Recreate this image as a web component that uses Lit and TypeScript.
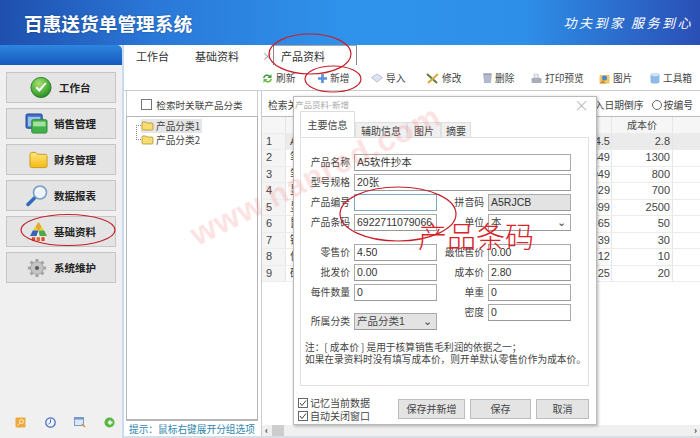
import { LitElement, html, css, svg } from "lit";
import { customElement } from "lit/decorators.js";

const icons: Record<string, unknown> = {
  check: svg`<svg width="22" height="23" viewBox="0 0 24 24"><defs><radialGradient id="g1" cx=".4" cy=".3" r=".8"><stop offset="0" stop-color="#a8e070"/><stop offset=".6" stop-color="#4cae3a"/><stop offset="1" stop-color="#1d7a22"/></radialGradient></defs><circle cx="12" cy="12" r="11" fill="url(#g1)" stroke="#2c7d2c"/><path d="M6 12.500l4.200 4.500L18 7.500l-1.500-1-6.300 6.800-2.600-2.400z" fill="#fff"/></svg>`,
  sales: svg`<svg width="23" height="21" viewBox="0 0 24 22"><rect x="1" y="1" width="17" height="15" rx="1.500" fill="#3f6fc8" stroke="#27468f"/><rect x="3" y="4" width="13" height="10" fill="#9cc0ee"/><rect x="7" y="7" width="16" height="14" rx="1.500" fill="#44b04a" stroke="#2e8a38"/><rect x="8.500" y="9" width="13" height="5" fill="#a6e0a0"/></svg>`,
  folder: svg`<svg width="19" height="18" viewBox="0 0 20 18"><defs><linearGradient id="g2" x1="0" y1="0" x2="0" y2="1"><stop offset="0" stop-color="#ffe680"/><stop offset="1" stop-color="#f4bb10"/></linearGradient></defs><path d="M1 3.500Q1 1 3 1h4l2 2h8q2 0 2 2v10q0 2-2 2H3q-2 0-2-2z" fill="url(#g2)" stroke="#c99a20"/></svg>`,
  search: svg`<svg width="22" height="23" viewBox="0 0 22 22"><path d="M9 13L2 20" stroke="#2c6cc0" stroke-width="3.500" stroke-linecap="round"/><circle cx="14" cy="8" r="6.500" fill="#eef4fb" stroke="#7d9cc4" stroke-width="1.600"/><path d="M10.500 6.500a4 4 0 0 1 4-2.500" stroke="#fff" stroke-width="1.500" fill="none"/></svg>`,
  base: svg`<svg width="19" height="23" viewBox="0 0 20 22"><path d="M10 1L4 10h12z" fill="#ecd11f"/><path d="M4 10L1 16h7l2-6z" fill="#3a62b8"/><path d="M10 10l1 6h8l-3-6z" fill="#4ea84e"/><path d="M7 6l3 4 3-4-3-5z" fill="#e7a43a"/><path d="M8 16h3l-1-6z" fill="#eee"/><rect x="1" y="16" width="18" height="5" fill="#f0efe8"/><rect x="3" y="17" width="3.500" height="4" fill="#d8492e"/><rect x="8" y="17" width="3.500" height="4" fill="#e26a30"/><rect x="13" y="17" width="3.500" height="4" fill="#d8492e"/></svg>`,
  gear: svg`<svg width="22" height="20" viewBox="0 0 22 22"><circle cx="11" cy="11" r="7.500" fill="#a8a8a8"/><g stroke="#a4a4a4" stroke-width="3.400"><path d="M11 1v20M1 11h20M4 4l14 14M18 4L4 18"/></g><circle cx="11" cy="11" r="6.500" fill="#c4c4c4"/><circle cx="11" cy="11" r="2.200" fill="#555"/></svg>`,
  refresh: svg`<svg width="11" height="11" viewBox="0 0 11 11"><path d="M1 5a4 4 0 0 1 7-2.200L9.500 1v4H5.500l1.300-1.200A2.400 2.400 0 0 0 2.600 5z" fill="#3d9b3d"/><path d="M10 6a4 4 0 0 1-7 2.200L1.500 10V6h4L4.200 7.200A2.400 2.400 0 0 0 8.400 6z" fill="#62b83c"/></svg>`,
  plus: svg`<svg width="9" height="9" viewBox="0 0 10 10"><path d="M3.500 0h3v3.500H10v3H6.500V10h-3V6.500H0v-3h3.500z" fill="#5a92dc"/></svg>`,
  imp: svg`<svg width="12" height="10" viewBox="0 0 12 10"><path d="M6 1l5.500 3.500L6 9 .5 4.500z" fill="#dfe3f4" stroke="#a9b0cf" stroke-width=".8"/></svg>`,
  edit: svg`<svg width="13" height="11" viewBox="0 0 13 11"><path d="M1 1l10 9" stroke="#6b7a35" stroke-width="2"/><path d="M12 1L2 10" stroke="#d9a83a" stroke-width="2"/></svg>`,
  del: svg`<svg width="9" height="10" viewBox="0 0 9 10"><path d="M.5 1h8L7.500 10h-6z" fill="#b5b9cd" stroke="#9a9eb5" stroke-width=".5"/><path d="M.5 1h8" stroke="#8a8fa8"/></svg>`,
  print: svg`<svg width="11" height="11" viewBox="0 0 11 11"><path d="M3 1h4l1 4H3z" fill="#e8eaf0" stroke="#aaa" stroke-width=".5"/><rect x=".5" y="5" width="10" height="5" rx="1" fill="#a9adb8"/></svg>`,
  pic: svg`<svg width="11" height="11" viewBox="0 0 11 11"><rect x=".5" y="2" width="10" height="8.500" rx="1" fill="#f0c860"/><circle cx="5.500" cy="5" r="2.500" fill="#4d84d4"/><path d="M.5 10.500L4 7l3 3.500z" fill="#d08a3a"/></svg>`,
  tool: svg`<svg width="10" height="12" viewBox="0 0 10 12"><rect x=".5" y="1" width="9" height="10.500" rx="2.500" fill="#8fb9e6"/><ellipse cx="5" cy="2.500" rx="4" ry="1.800" fill="#cfe2f6"/></svg>`,
  tree: svg`<svg width="13" height="10" viewBox="0 0 13 10"><path d="M1 2q0-1 1-1h3l1 1h5q1 0 1 1v5q0 1-1 1H2q-1 0-1-1z" fill="#f7dc70" stroke="#b09030" stroke-width=".8"/></svg>`,
  f1: svg`<svg width="11" height="11" viewBox="0 0 11 11"><rect x=".5" y=".5" width="10" height="10" rx="1" fill="#eda940"/><circle cx="6.500" cy="4.500" r="2" fill="none" stroke="#fff1c6"/><path d="M5 6L2.500 8.500" stroke="#fff1c6"/></svg>`,
  f2: svg`<svg width="11" height="11" viewBox="0 0 11 11"><circle cx="5.500" cy="5.500" r="4.700" fill="#eef2fb" stroke="#3f68bd" stroke-width="1.200"/><path d="M5.500 2.500v3L3.500 7" stroke="#3f68bd" fill="none"/></svg>`,
  f3: svg`<svg width="12" height="11" viewBox="0 0 12 11"><rect x=".5" y=".5" width="9" height="8" fill="#dbe8f7" stroke="#7f9cc4"/><rect x=".5" y=".5" width="9" height="2" fill="#6f95cc"/><path d="M8 7l3 3" stroke="#d49a3c" stroke-width="1.600"/></svg>`,
  f4: svg`<svg width="11" height="11" viewBox="0 0 11 11"><circle cx="5.500" cy="5.500" r="5" fill="#58b83e"/><path d="M6.500 2.500L3.500 5.500l3 3v-2h2v-2h-2z" fill="#fff"/></svg>`,
};

const navs: [string, string, string][] = [
  ["check", "工作台", "wide"],
  ["sales", "销售管理", ""],
  ["folder", "财务管理", ""],
  ["search", "数据报表", ""],
  ["base", "基础资料", ""],
  ["gear", "系统维护", ""],
];
const tools = [
  ["refresh", "刷新"], ["plus", "新增"], ["imp", "导入"], ["edit", "修改"],
  ["del", "删除"], ["print", "打印预览"], ["pic", "图片"], ["tool", "工具箱"],
];
const rows = [
  ["A5软件抄本", "54.5", "2.8"], ["笔记本", "1649", "1300"], ["笔记本", "949", "800"],
  ["显示器", "829", "700"], ["显示器", "2899", "2500"], ["鼠标", "65", "50"],
  ["键盘", "39", "30"], ["优盘", "12", "10"], ["硬盘", "25", "20"],
];
const leftFields = [["零售价", "4.50"], ["批发价", "0.00"], ["每件数量", "0"]];
const rightFields = [["最低售价", "0.00"], ["成本价", "2.80"], ["单重", "0"], ["密度", "0"]];

@customElement("app-root")
export class AppRoot extends LitElement {
  static styles = css`
    :host { display: block; position: relative; width: 700px; height: 438px; overflow: hidden; background: #fff;
      font-family: "Noto Sans CJK SC", "Liberation Sans", sans-serif; font-size: 10px; color: #333; }
    .page { display: flex; flex-direction: column; height: 438px; }
    .top { height: 45px; flex: none; display: flex; justify-content: space-between; align-items: center; padding: 0 7px 0 24px; box-sizing: border-box;
      background: linear-gradient(90deg, #1f4fae 0%, #2a78d8 22%, #2f93ec 50%, #2e8fe8 75%, #2a4fb5 100%); color: #fff; }
    .title { font-size: 18.700px; font-weight: 700; line-height: 45px; text-shadow: 0 0 2px rgba(0,0,0,.3); }
    .slogan { font-size: 13px; font-style: italic; letter-spacing: 2.500px; font-weight: 400; }
    .body { flex: 1; display: flex; min-height: 0; }
    .side { width: 122px; flex: none; background: #f0f0f0; border-right: 2px solid #c9daf2; display: flex; flex-direction: column; }
    .sidehead { height: 20px; background: linear-gradient(#2e86e0, #1458bc); border-top-right-radius: 5px; }
    .nav { display: flex; flex-direction: column; gap: 5px; padding: 7px 6px 0; }
    .navbtn { height: 31px; box-sizing: border-box; background: #e4e4e4; border: 1px solid #c6c6c6; display: grid; grid-template-columns: 42px 1fr; align-items: center; font-size: 10.500px; font-weight: 700; color: #222; }
    .navbtn .ic { display: flex; justify-content: flex-end; padding-right: 1px; height: 24px; align-items: center; }
    .navbtn span { padding-left: 5px; }
    .navbtn.wide { grid-template-columns: 46px 1fr; }
    .navbtn.wide span { padding-left: 6px; }
    .foot { margin-top: auto; display: grid; grid-template-columns: repeat(4, 29.500px); padding: 0 0 7px 15px; }
    .main { flex: 1; min-width: 0; display: flex; flex-direction: column; }
    .tabs { height: 20px; display: flex; align-items: flex-end; padding-left: 12px; font-size: 11px; color: #333; flex: none; }
    .tab { width: 59px; line-height: 22px; height: 20px; }
    .tab.mid { width: 67px; }
    .x { width: 11px; color: #999; font-size: 11px; line-height: 22px; height: 20px; }
    .tab.on { width: 84px; box-sizing: border-box; border: 1px solid #888; border-bottom: none; border-top-color: #aaa; padding-left: 7px; line-height: 20px; background: #fff; }
    .tools { height: 26px; flex: none; display: grid; grid-template-columns: 56px 53px 55px 57px 48px 68px 51px 1fr; padding-left: 138px; align-items: center; font-size: 9.700px; color: #444; }
    .tool { display: flex; align-items: center; gap: 3px; white-space: nowrap; }
    .panels { flex: 1; min-height: 0; display: flex; gap: 3px; padding-left: 2px; border-top: 1px solid #ccc; margin-top: -1px; border-bottom: 2px solid #d5dfe6; }
    .lp { width: 132px; flex: none; display: flex; flex-direction: column; }
    .lphead { height: 25px; flex: none; box-sizing: border-box; display: flex; align-items: center; justify-content: center; gap: 4px; border: 1px solid #ccc; border-width: 0 1px; font-size: 9.600px; color: #444; padding-top: 2px; }
    .cb { width: 9px; height: 9px; border: 1px solid #777; flex: none; }
    .treebox { flex: 1; border: 1px solid #b5b5b5; border-bottom-width: 2px; padding: 2px 0 0 14px; display: flex; flex-direction: column; position: relative; }
    .node { display: flex; align-items: center; gap: 2px; height: 14px; font-size: 9.700px; color: #444; width: fit-content; padding-right: 2px; }
    .node.sel { background: #e6e6e6; }
    .tree-line { position: absolute; left: 9px; top: 8px; width: 4px; height: 13px; border: 1px dotted #888; border-right: none; }
    .hint { height: 15px; flex: none; padding-left: 3px; font-size: 9.700px; line-height: 16px; color: #2f86ae; white-space: nowrap; }
    .rp { flex: 1; min-width: 0; display: flex; flex-direction: column; border-left: 1px solid #ccc; }
    .rphead { height: 25px; flex: none; display: flex; justify-content: space-between; align-items: center; padding: 2px 7px 0 6px; box-sizing: border-box; font-size: 9.800px; color: #444; white-space: nowrap; }
    .radio { display: inline-block; width: 8px; height: 8px; border: 1px solid #666; border-radius: 50%; margin: 0 2px 0 8px; vertical-align: -1px; }
    .grid { flex: 1; min-height: 0; border-top: 1px solid #bbb; font-size: 10px; }
    .tr { display: grid; grid-template-columns: 24px 326px 61px 1fr; height: 16.470px; box-sizing: border-box; border-bottom: 1px solid #ececec; line-height: 15.500px; color: #444; font-family: "Liberation Sans", "Noto Sans CJK SC", sans-serif; }
    .tr.h { background: #f6f6f6; height: 17px; font-family: "Noto Sans CJK SC", sans-serif; }
    .tr.on { background: #ebebeb; }
    .tr > div { border-right: 1px solid #e6e6e6; white-space: nowrap; overflow: hidden; }
    .tr > div:last-child { border-right: none; }
    .tr .n { background: #f4f4f4; padding-left: 4px; font-size: 11px; }
    .tr .v1 { display: flex; justify-content: space-between; padding: 0 1px 0 4px; font-size: 11px; }
    .tr .r { text-align: right; padding-right: 2px; font-size: 11px; }
    .tr .ctr { text-align: center; }
    .scroll { height: 11px; flex: none; background: #f0f0f0; display: flex; justify-content: space-between; align-items: center; padding: 0 3px; font-size: 9px; color: #333; font-weight: 700; }
    .thumb { width: 12px; height: 11px; background: #cdcdcd; margin-left: 4px; margin-right: auto; }
    .dlg { position: absolute; left: 293px; top: 96px; width: 304px; height: 329px; box-sizing: border-box; background: #fff; border: 1px solid #bbb; box-shadow: 1px 1px 3px rgba(0,0,0,.3); padding: 0 7px 0 6px; display: flex; flex-direction: column; }
    .dt { height: 14px; display: flex; justify-content: space-between; font-size: 8.500px; color: #aaa; line-height: 14px; margin: 0 -5px 0 -5px; flex: none; padding-right: 5px; }
    .dt i { font-style: normal; font-size: 15px; color: #aaa; font-weight: 300; line-height: 15px; }
    .dtabs { display: flex; height: 27px; align-items: flex-end; flex: none; font-size: 10px; color: #444; }
    .dtab { height: 16px; line-height: 16px; background: #f0f0f0; border: 1px solid #e0e0e0; border-bottom: none; box-sizing: border-box; text-align: center; }
    .dtab.on { height: 27px; background: #fff; width: 55px; line-height: 25px; border-color: #ddd; }
    .dtab.w52 { width: 52px; }
    .dtab.w34 { width: 34px; }
    .dtab.w30 { width: 30px; }
    .panel { height: 249px; box-sizing: border-box; border: 1px solid #e0e0e0; margin-top: -1px; padding: 16px 17px 0 3px; flex: none; }
    .row { display: grid; grid-template-columns: 46px 1fr; column-gap: 4px; height: 17px; margin-bottom: 3px; }
    .lab { text-align: right; line-height: 17px; color: #444; font-size: 9.800px; white-space: nowrap; }
    .inp { box-sizing: border-box; height: 17px; border: 1px solid #aaa; border-bottom-color: #999; padding-left: 2px; line-height: 15px; font-size: 10.500px; color: #333; white-space: nowrap; overflow: hidden; background: #fff; font-family: "Liberation Sans", "Noto Sans CJK SC", sans-serif; }
    .inp.act { border-color: #7fa9c4; }
    .inp.gray { background: #e3e3e3; }
    .inp.sel { display: flex; justify-content: space-between; padding-right: 4px; color: #444; }
    .two { display: grid; grid-template-columns: 133px 134px; }
    .two .row { grid-template-columns: 46px 83px; }
    .two .row.r { grid-template-columns: 47px 83px; }
    .stackgap { height: 10px; }
    .catrow { margin-top: 12px; }
    .note { font-size: 9.700px; line-height: 11.500px; color: #444; margin-top: 9px; margin-left: 1px; white-space: nowrap; }
    .dfoot { flex: 1; display: flex; justify-content: space-between; align-items: flex-start; padding-top: 11px; margin-left: -2px; }
    .checks { display: flex; flex-direction: column; font-size: 10px; color: #444; line-height: 12.500px; }
    .chk { display: flex; align-items: center; gap: 2px; white-space: nowrap; }
    .chk svg { flex: none; }
    .btns { display: flex; gap: 5px; margin-top: 2px; }
    .btn { height: 20px; box-sizing: border-box; background: #e4e4e4; border: 1px solid #bdbdbd; font-size: 10px; line-height: 18px; text-align: center; color: #444; }
    .btn.a { width: 67px; } .btn.b { width: 61px; } .btn.c { width: 53px; }
    .overlay { position: absolute; inset: 0; pointer-events: none; }
    .wm { position: absolute; left: 178px; top: 157px; font: 700 32px "Liberation Sans", sans-serif; color: rgba(240, 110, 110, .2); transform: rotate(-26.500deg); letter-spacing: .8px; white-space: nowrap; filter: blur(.5px); }
    .stamp { position: absolute; left: 418px; top: 217px; font: 300 29px "Noto Sans CJK SC", serif; color: #d8232a; line-height: 36px; white-space: nowrap; }
    .ann { position: absolute; left: 0; top: 0; fill: none; stroke: #c5202a; stroke-width: 1.200; }
  `;

  render() {
    const chk = svg`<svg width="10" height="10" viewBox="0 0 10 10"><rect x=".5" y=".5" width="9" height="9" fill="#fff" stroke="#666"/><path d="M2 5l2 2.500L8 2.500" stroke="#444" fill="none"/></svg>`;
    return html`
      <div class="page">
        <div class="top">
          <div class="title">百惠送货单管理系统</div>
          <div class="slogan">功夫到家 服务到心</div>
        </div>
        <div class="body">
          <div class="side">
            <div class="sidehead"></div>
            <div class="nav">
              ${navs.map(([i, t, c]) => html`<div class="navbtn ${c}"><div class="ic">${icons[i]}</div><span>${t}</span></div>`)}
            </div>
            <div class="foot">${["f1", "f2", "f3", "f4"].map((i) => html`<div>${icons[i]}</div>`)}</div>
          </div>
          <div class="main">
            <div class="tabs">
              <div class="tab">工作台</div>
              <div class="tab mid">基础资料</div>
              <div class="x">×</div>
              <div class="tab on">产品资料</div>
            </div>
            <div class="tools">
              ${tools.map(([i, t]) => html`<div class="tool">${icons[i]}<span>${t}</span></div>`)}
            </div>
            <div class="panels">
              <div class="lp">
                <div class="lphead"><div class="cb"></div><span>检索时关联产品分类</span></div>
                <div class="treebox">
                  <div class="tree-line"></div>
                  <div class="node sel">${icons.tree}<span>产品分类1</span></div>
                  <div class="node">${icons.tree}<span>产品分类2</span></div>
                </div>
                <div class="hint">提示：鼠标右键展开分组选项</div>
              </div>
              <div class="rp">
                <div class="rphead"><span>检索关键字</span><span>录入日期倒序<i class="radio"></i>按编号</span></div>
                <div class="grid">
                  <div class="tr h"><div></div><div></div><div class="ctr">成本价</div><div></div></div>
                  ${rows.map((r, k) => html`
                    <div class="tr ${k === 0 ? "on" : ""}">
                      <div class="n">${k + 1}</div>
                      <div class="v1"><span>${r[0]}</span><span>${r[1]}</span></div>
                      <div class="r">${r[2]}</div>
                      <div></div>
                    </div>`)}
                </div>
                <div class="scroll"><span>‹</span><div class="thumb"></div><span>›</span></div>
              </div>
            </div>
          </div>
        </div>
      </div>

      <div class="dlg">
        <div class="dt"><span>产品资料-新增</span><i>×</i></div>
        <div class="dtabs">
          <div class="dtab on">主要信息</div>
          <div class="dtab w52">辅助信息</div>
          <div class="dtab w34">图片</div>
          <div class="dtab w30">摘要</div>
        </div>
        <div class="panel">
          <div class="row"><div class="lab">产品名称</div><div class="inp">A5软件抄本</div></div>
          <div class="row"><div class="lab">型号规格</div><div class="inp">20张</div></div>
          <div class="two">
            <div class="row"><div class="lab">产品编号</div><div class="inp act"></div></div>
            <div class="row r"><div class="lab">拼音码</div><div class="inp gray">A5RJCB</div></div>
            <div class="row"><div class="lab">产品条码</div><div class="inp">6922711079066</div></div>
            <div class="row r"><div class="lab">单位</div><div class="inp sel"><span>本</span><span>⌄</span></div></div>
          </div>
          <div class="stackgap"></div>
          <div class="two">
            <div>
              ${leftFields.map(([a, b]) => html`<div class="row"><div class="lab">${a}</div><div class="inp">${b}</div></div>`)}
              <div class="row catrow"><div class="lab">所属分类</div><div class="inp gray sel"><span>产品分类1</span><span>⌄</span></div></div>
            </div>
            <div>
              ${rightFields.map(([a, b]) => html`<div class="row r"><div class="lab">${a}</div><div class="inp">${b}</div></div>`)}
            </div>
          </div>
          <div class="note">注：[ 成本价 ] 是用于核算销售毛利润的依据之一；<br />如果在录资料时没有填写成本价，则开单默认零售价作为成本价。</div>
        </div>
        <div class="dfoot">
          <div class="checks">
            <div class="chk">${chk}<span>记忆当前数据</span></div>
            <div class="chk">${chk}<span>自动关闭窗口</span></div>
          </div>
          <div class="btns">
            <div class="btn a">保存并新增</div>
            <div class="btn b">保存</div>
            <div class="btn c">取消</div>
          </div>
        </div>
      </div>

      <div class="overlay">
        <div class="wm">www.hanred.com</div>
        <svg class="ann" width="700" height="438" viewBox="0 0 700 438">
          <ellipse cx="310" cy="54" rx="41" ry="20" />
          <ellipse cx="333" cy="79" rx="28" ry="13" />
          <ellipse cx="68" cy="230" rx="47" ry="15.500" />
          <ellipse cx="398" cy="214" rx="58" ry="27" />
        </svg>
        <div class="stamp">产品条码</div>
      </div>
    `;
  }
}
